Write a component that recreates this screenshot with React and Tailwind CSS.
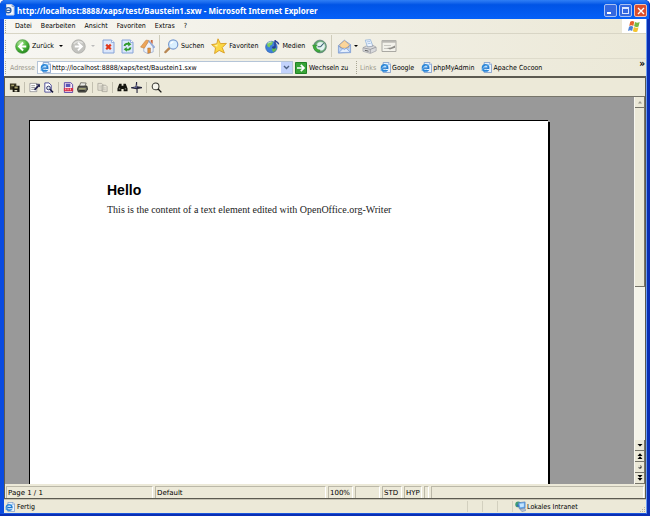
import clsx from 'clsx'

const menuItems = ['Datei', 'Bearbeiten', 'Ansicht', 'Favoriten', 'Extras', '?']

const links = ['Google', 'phpMyAdmin', 'Apache Cocoon']

function PageIcon({ className = 'size-3' }) {
    return (
        <svg viewBox="0 0 12 12" className={clsx('shrink-0', className)} aria-hidden="true">
            <path d="M3.5.5h6l2 2v9h-8z" fill="#e8f2fd" stroke="#6d8fc4" strokeWidth=".8" />
            <path d="M9.5.5v2h2" fill="#fff" stroke="#6d8fc4" strokeWidth=".7" />
            <circle cx="5" cy="6.5" r="3.3" fill="#cfe8fb" stroke="#2a86d8" strokeWidth="1.9" />
            <path d="M2.5 6.7h5.6" stroke="#1c72c9" strokeWidth="1.4" />
            <path d="M6.4 7.5h3v1.3H6.2z" fill="#e8f2fd" />
            <path d="M.6 9.6C2.5 5 6 2.6 9.6 3" fill="none" stroke="#7cbcf0" strokeWidth=".8" />
        </svg>
    )
}

function TitleIcon() {
    return (
        <svg viewBox="0 0 11 12" className="h-3 w-[11px] shrink-0" aria-hidden="true">
            <path d="M2.5.5H8l2 2V11H2.5z" fill="#f4f7fd" stroke="#c3cfe6" />
            <path d="M8 .5v2h2" fill="none" stroke="#8597bb" strokeWidth=".8" />
            <circle cx="4.3" cy="6.2" r="2.6" fill="#fff" stroke="#2b5fae" strokeWidth="1.4" />
            <path d="M2.2 6.4h4.6" stroke="#2b5fae" strokeWidth="1.1" />
        </svg>
    )
}

function BackIcon() {
    return (
        <svg viewBox="0 0 16 16" className="size-[15px]" aria-hidden="true">
            <defs>
                <radialGradient id="back" cx=".35" cy=".25" r=".85">
                    <stop offset="0" stopColor="#b5e6a0" />
                    <stop offset=".5" stopColor="#4fb83d" />
                    <stop offset="1" stopColor="#1c7d18" />
                </radialGradient>
            </defs>
            <circle cx="8" cy="8" r="7.3" fill="url(#back)" stroke="#3f8f35" strokeWidth=".7" />
            <path d="M8.6 3.8 4.4 8l4.2 4.2M4.8 8H12" fill="none" stroke="#fff" strokeWidth="2.1" />
        </svg>
    )
}

function ForwardIcon() {
    return (
        <svg viewBox="0 0 16 16" className="size-[15px]" aria-hidden="true">
            <circle cx="8" cy="8" r="7.2" fill="#c3c3bf" stroke="#aaaaa5" strokeWidth=".8" />
            <path d="M3 5.5a6 6 0 0 1 9.5-1" fill="none" stroke="#e2e2df" strokeWidth="1.5" />
            <path d="M7.4 3.8 11.6 8l-4.2 4.2M11.2 8H4" fill="none" stroke="#fff" strokeWidth="2" />
        </svg>
    )
}

function StopIcon() {
    return (
        <svg viewBox="0 0 13 15" className="h-[15px] w-[13px]" aria-hidden="true">
            <path d="M1 1h8.5L12 3.5V14H1z" fill="#dbe7fb" stroke="#86a3d8" />
            <path d="M9.5 1v2.5H12" fill="#fff" stroke="#86a3d8" strokeWidth=".8" />
            <path d="m4.2 5.6 4.6 4.6M8.8 5.6l-4.6 4.6" stroke="#e2371b" strokeWidth="2.2" />
        </svg>
    )
}

function RefreshIcon() {
    return (
        <svg viewBox="0 0 13 15" className="h-[15px] w-[13px]" aria-hidden="true">
            <path d="M1 1h8.5L12 3.5V14H1z" fill="#dbe7fb" stroke="#86a3d8" />
            <path d="M9.5 1v2.5H12" fill="#fff" stroke="#86a3d8" strokeWidth=".8" />
            <path d="M3.5 7c.3-2 2-2.6 4.2-2" fill="none" stroke="#2e9a2b" strokeWidth="1.9" />
            <path d="m7 2.6 3.3 2.6-3 2.3z" fill="#2e9a2b" />
            <path d="M9.5 8.4c-.3 2-2 2.6-4.2 2" fill="none" stroke="#2e9a2b" strokeWidth="1.9" />
            <path d="m6 12.8-3.3-2.6 3-2.3z" fill="#2e9a2b" />
        </svg>
    )
}

function HomeIcon() {
    return (
        <svg viewBox="0 0 16 16" className="size-[15px]" aria-hidden="true">
            <path d="m4 8.5 5.5-6L14 8.8v5L8 15.5l-4-2.2z" fill="#eef2fb" stroke="#8aa0cb" strokeWidth=".7" />
            <path d="M.6 8.6 6.4 1.2l3.2.4L4.6 9.8z" fill="#eda65a" stroke="#c27a38" strokeWidth=".6" />
            <path d="M9.2 1.8 15.2 8.6l-1.4 1" fill="none" stroke="#93a9d5" strokeWidth="1.5" />
            <path d="M11.5 1h2v4.3l-2-2.2z" fill="#c9643b" />
            <path d="M8.3 9.6h2.8v5l-2.8.7z" fill="#e6963f" stroke="#9c6029" strokeWidth=".5" />
        </svg>
    )
}

function SearchIcon() {
    return (
        <svg viewBox="0 0 16 16" className="size-[15px]" aria-hidden="true">
            <path d="M5.8 9.7 1.5 14" stroke="#b88754" strokeWidth="2.4" strokeLinecap="round" />
            <circle cx="9.8" cy="5.8" r="4.9" fill="#d9efff" stroke="#7a9bcf" strokeWidth="1.3" />
            <path d="M7.2 5.3c.3-1.5 1.4-2.3 2.9-2.3" fill="none" stroke="#fff" strokeWidth="1.4" />
        </svg>
    )
}

function StarIcon() {
    return (
        <svg viewBox="0 0 16 16" className="size-4" aria-hidden="true">
            <path
                d="m7 .8 2.4 4.8 6-.2-4.2 4.2 2.2 5.4-5.2-2.6-4.6 3.2.9-5.8L.6 6.6l5.2-.8z"
                fill="#fbd744"
                stroke="#d89c22"
                strokeWidth=".9"
                strokeLinejoin="round"
            />
            <path d="m7.2 3.2-.8 3.4-3.2.7 3 1.5z" fill="#fff3a6" />
        </svg>
    )
}

function MediaIcon() {
    return (
        <svg viewBox="0 0 16 16" className="size-[15px]" aria-hidden="true">
            <circle cx="6.8" cy="8.6" r="6.2" fill="#3d7fd9" stroke="#2a58ac" strokeWidth=".6" />
            <path d="M2 5.4c2-2.6 4.7-3.2 6.6-2.3L7.3 6 5.6 6.8 4.8 9 2.7 8z" fill="#7ccb5d" />
            <path d="m8 9.2 3.5.3.6 2.2-3.2 2.4-1.6-2.4z" fill="#62b952" />
            <path d="M3 4.7c1.2-1.2 2.4-1.6 3.8-1.6" fill="none" stroke="#d4edfb" />
            <path d="M10.7 9V1.2c.6 2 3.6 2 3.9 4.5" fill="none" stroke="#263e91" strokeWidth="1.5" />
            <ellipse cx="9.4" cy="9" rx="1.8" ry="1.4" fill="#263e91" />
        </svg>
    )
}

function HistoryIcon() {
    return (
        <svg viewBox="0 0 16 16" className="size-[15px]" aria-hidden="true">
            <circle cx="8.5" cy="8" r="6.8" fill="#5fa56c" stroke="#5b7b78" strokeWidth=".8" />
            <circle cx="9.2" cy="7.8" r="4.9" fill="#e4f3f0" stroke="#88b69c" strokeWidth=".6" />
            <path d="M9.2 8.2 12.5 4.5M9.2 8.2H6" stroke="#385b6e" strokeWidth="1.1" />
            <path d="m.6 6.5 5.2-.2-2 2.1c1 2 2.8 3.2 5 3.3L7.7 14C4.4 13.4 2.6 12 1.8 9.8z" fill="#3fae3c" stroke="#2a7c2c" strokeWidth=".4" />
        </svg>
    )
}

function MailIcon() {
    return (
        <svg viewBox="0 0 16 16" className="size-[15px]" aria-hidden="true">
            <path d="M1.5 7 7.8 1.3 14.5 6v8.5l-13 .5z" fill="#b8d3f8" stroke="#7596cf" strokeWidth=".8" />
            <path d="m3 6 5-4.2L13 6l-.5 3.5h-9z" fill="#fbd59a" stroke="#d9a35d" strokeWidth=".6" />
            <path d="m1.6 7.4 6.3 4 6.5-5" fill="none" stroke="#6f91cc" strokeWidth=".9" />
            <path d="m1.8 14.6 4.5-4.4 1.6 1.1 1.8-1.4 4.6 4.2z" fill="#e6f1ff" stroke="#7899d3" strokeWidth=".7" />
        </svg>
    )
}

function PrinterIcon() {
    return (
        <svg viewBox="0 0 16 16" className="size-[15px]" aria-hidden="true">
            <path d="M3.5 1.2 9 .7l2.6 7-5.8.8z" fill="#edf5ff" stroke="#8badd8" strokeWidth=".8" />
            <path d="m5.3 3 3.3-.3M6 5l3.3-.4" stroke="#8badd8" strokeWidth=".7" />
            <path d="m1 9.3 3.8-2 1 1.2 5.8-.8-.4-1.2 3.9 2.2v4L9 15.4l-8-2.3z" fill="#d9dadc" stroke="#9c9ea3" strokeWidth=".7" />
            <path d="M1.2 9.4 8.8 11l6-2.2M8.8 11v4" fill="none" stroke="#8c8e94" strokeWidth=".8" />
            <path d="m3 12 4 1" stroke="#555" />
        </svg>
    )
}

function EditIcon() {
    return (
        <svg viewBox="0 0 16 14" className="h-[14px] w-4" aria-hidden="true">
            <path d="M1 1.5h14v11H1z" fill="#f3f2eb" stroke="#aaa9a3" />
            <path d="M1 1.5h14v2.2H1z" fill="#bab9b4" />
            <path d="M3 6.5h7M3 9.5h4" stroke="#c9c8c2" />
            <path d="m6 9 4-.5 4-2v2.2l-5 1.7z" fill="#8f8e89" />
        </svg>
    )
}

function GoIcon() {
    return (
        <svg viewBox="0 0 12 12" className="size-3" aria-hidden="true">
            <path d="M.5.5h11v11H.5z" fill="#38a437" stroke="#218224" />
            <path d="M2 6h6.5M5.8 2.8 9 6 5.8 9.2" fill="none" stroke="#fff" strokeWidth="1.7" />
        </svg>
    )
}

function WindowsFlag() {
    return (
        <svg viewBox="0 0 14 12" className="h-[13px] w-[15px]" aria-hidden="true">
            <path d="M3 1.5c1.5-.9 2.5-.7 3.8 0l-.9 4c-1.3-.8-2.4-.8-3.8 0z" fill="#e8622b" />
            <path d="M7.5 1.9c1.500.8 2.700.7 4.300 0l-1 4c-1.500.7-2.800.7-4.200-.1z" fill="#77b843" />
            <path d="M1.9 6.2c1.5-.8 2.6-.7 3.8 0l-.9 4c-1.3-.8-2.4-.8-3.9 0z" fill="#4a80d5" />
            <path d="M6.4 6.5c1.500.8 2.700.8 4.300.1l-1 4c-1.500.7-2.800.7-4.200-.1z" fill="#f3c431" />
        </svg>
    )
}

function IntranetIcon() {
    return (
        <svg viewBox="0 0 12 12" className="size-[11px]" aria-hidden="true">
            <circle cx="3.5" cy="3.7" r="3.2" fill="#3f9d72" />
            <path d="M1.5 4.5c1-.8 2-.7 3 .5l-1 1.8z" fill="#2d69c2" />
            <path d="m3.5 2 7.5-1v6.5l-6.3 1z" fill="#67a9ee" stroke="#507bb9" strokeWidth=".7" />
            <path d="m5 3 4.7-.6v3.8l-4 .7z" fill="#c3e4ff" />
            <path d="m5.5 9 5.5-.8.5 2.3-4 1z" fill="#bdc8d9" stroke="#6881a4" strokeWidth=".6" />
        </svg>
    )
}

const writerTools = [
    [
        {
            label: 'Save copies',
            drawing: (
                <>
                    <path d="M1 1.5h7v7H1z" fill="#3a3620" />
                    <path d="M4 4h7.5v7H4z" fill="#16150c" />
                    <path d="M2.5 3h3v1.5h-3zM6 5h3.5v2H6z" fill="#aaa36b" />
                    <path d="M6 8.8h3v1.5H6z" fill="#dcd9c0" />
                </>
            ),
        },
    ],
    [
        {
            label: 'Edit file',
            drawing: (
                <>
                    <path d="M1 1.5h7.5v9H1z" fill="#fff" stroke="#77777d" strokeWidth=".7" />
                    <path d="M2.5 4h4M2.5 6h4M2.5 8h3" stroke="#777" strokeWidth=".8" />
                    <path d="m11 3.5-5 5" stroke="#20204e" strokeWidth="2" />
                    <path d="M8 2.5h3.5v3" fill="none" stroke="#20204e" />
                </>
            ),
        },
        {
            label: 'Page preview',
            drawing: (
                <>
                    <path d="M2 1h4.5L9 3.5V11H2z" fill="#fff" stroke="#34348e" strokeWidth=".9" />
                    <circle cx="6" cy="6.5" r="2" fill="#d9e7ef" stroke="#26265e" />
                    <path d="m7.5 8 3.5 3.3" stroke="#18183c" strokeWidth="1.6" />
                </>
            ),
        },
    ],
    [
        {
            label: 'Export as PDF',
            drawing: (
                <>
                    <path d="M1.5.7h7l2 2v8.8h-9z" fill="#f6e4ef" stroke="#5445a8" />
                    <path d="M3 2h5v3.5H3z" fill="#5b57b5" />
                    <path d="M1 6.5h10V10H1z" fill="#d62e48" />
                    <path d="M3 7v2M5.5 7v2M8 7v2" stroke="#fff" strokeWidth=".8" />
                </>
            ),
        },
        {
            label: 'Print',
            drawing: (
                <>
                    <path d="m4 .8 6 .3-1.5 4h-6z" fill="#e9e9e4" stroke="#55554e" strokeWidth=".8" />
                    <path d="m1.5 4.6 9.3-.2.7 3.6-2 3h-8l-1-3z" fill="#5f605a" stroke="#25251e" strokeWidth=".9" />
                    <path d="M2 7.5h7.5" stroke="#d5d58a" />
                    <path d="M2.5 9.5h6" stroke="#222" />
                </>
            ),
        },
    ],
    [
        {
            label: 'Copy',
            disabled: true,
            drawing: (
                <>
                    <path d="M1 1.5h4L6.5 3v6H1zM5.5 3.5h4L11 5v5.5H5.5z" fill="#e7e4d7" stroke="#aaa89d" strokeWidth=".9" />
                    <path d="M2.5 4.5H5M2.5 6.5H5M7 6.5h2.5M7 8.5h2.5" stroke="#b5b3a8" strokeWidth=".7" />
                </>
            ),
        },
    ],
    [
        {
            label: 'Find and replace',
            drawing: (
                <>
                    <path d="M2.5 2H5v2h2V2h2.5l2 5v3H7.2V7.5H4.8V10H.5V7z" fill="#15150f" />
                    <path d="M2 7.5h1.5M8.5 7.5H10" stroke="#a4a398" />
                </>
            ),
        },
        {
            label: 'Navigator',
            drawing: (
                <>
                    <path d="M5.5 0h1.2v4.5L12 5.5v1.2l-4.8.8V12H6V8L0 6.7V5.6l5-.8z" fill="#25253d" />
                    <path d="M6 3v3H3" fill="none" stroke="#8c90c9" strokeWidth=".6" />
                </>
            ),
        },
    ],
    [
        {
            label: 'Zoom',
            drawing: (
                <>
                    <circle cx="5" cy="4.8" r="3.7" fill="#f7f6ee" stroke="#33332e" strokeWidth="1.1" />
                    <path d="m7.8 7.6 3.5 3.7" stroke="#1b1b18" strokeWidth="1.5" />
                </>
            ),
        },
    ],
]

function Grip() {
    return <div className="h-[13px] w-px shrink-0 self-center border-l border-dotted border-[#aaa794]" />
}

function Separator() {
    return <div className="h-[22px] w-px shrink-0 bg-[#cfccba]" />
}

function DropArrow({ muted }) {
    return (
        <svg viewBox="0 0 4 2" className="h-[2px] w-1 shrink-0" aria-hidden="true">
            <path d="M0 0h4L2 2z" fill={muted ? '#bbb' : '#000'} />
        </svg>
    )
}

function TitleBar() {
    return (
        <header className="flex h-[19px] shrink-0 items-center rounded-t-[5px] border-r border-[#0a2fb4] bg-linear-to-b from-[#2f7ff5] via-[#0054e6] via-25% to-[#0560f8] pr-[2px] pl-1">
            <TitleIcon />
            <h1 className="ml-[2px] truncate pt-[2px] font-['Noto_Sans',sans-serif] text-[8px] leading-[12px] font-bold text-white">
                http://localhost:8888/xaps/test/Baustein1.sxw - Microsoft Internet Explorer
            </h1>
            <div className="ml-auto flex gap-[2px] pt-[2px]">
                <button aria-label="Minimize" className="flex size-[13px] rounded-[2px] border border-[#a9c1f3] bg-[#3468e0]">
                    <span className="mt-[7px] ml-[2px] h-[2px] w-1 bg-white" />
                </button>
                <button aria-label="Maximize" className="flex size-[13px] items-center justify-center rounded-[2px] border border-[#a9c1f3] bg-[#3468e0]">
                    <span className="size-[7px] border border-t-2 border-[#dbe6ff]" />
                </button>
                <button aria-label="Close" className="flex size-[13px] items-center justify-center rounded-[2px] border border-[#efc0b4] bg-[#dc4e2c]">
                    <svg viewBox="0 0 8 8" className="size-2">
                        <path d="m1 1 6 6M7 1 1 7" stroke="#fff" strokeWidth="1.4" />
                    </svg>
                </button>
            </div>
        </header>
    )
}

function MenuBar() {
    return (
        <nav className="flex h-[15px] shrink-0 border-b border-[#d8d5c5]">
            <div className="flex flex-1 items-center gap-[9px] bg-linear-to-r from-[#f7f6f2] to-[#ece9d8] pl-[1px]">
                <Grip />
                {menuItems.map((item) => (
                    <button key={item}>{item}</button>
                ))}
            </div>
            <div className="flex w-6 items-center justify-center bg-white">
                <WindowsFlag />
            </div>
        </nav>
    )
}

function ToolBar() {
    return (
        <div className="flex h-[25px] shrink-0 items-center border-b border-[#dedbcb] bg-linear-to-r from-[#f7f6f2] to-[#ece9d8] pl-[1px]">
            <Grip />
            <button className="ml-[9px] flex items-center gap-[2px]">
                <BackIcon />
                Zurück
            </button>
            <button aria-label="Back history" className="ml-[5px]">
                <DropArrow />
            </button>
            <button aria-label="Forward" className="ml-2">
                <ForwardIcon />
            </button>
            <button aria-label="Forward history" className="ml-[5px]">
                <DropArrow muted />
            </button>
            <div className="ml-[7px] flex gap-[6px]">
                <button aria-label="Stop">
                    <StopIcon />
                </button>
                <button aria-label="Refresh">
                    <RefreshIcon />
                </button>
                <button aria-label="Home">
                    <HomeIcon />
                </button>
            </div>
            <div className="ml-1 flex items-center">
                <Separator />
            </div>
            <div className="ml-1 flex gap-[7px]">
                <button className="flex items-center gap-[2px]">
                    <SearchIcon />
                    Suchen
                </button>
                <button className="flex items-center gap-[2px]">
                    <StarIcon />
                    Favoriten
                </button>
                <button className="flex items-center gap-[2px]">
                    <MediaIcon />
                    Medien
                </button>
                <button aria-label="History">
                    <HistoryIcon />
                </button>
            </div>
            <div className="ml-1 flex items-center">
                <Separator />
            </div>
            <button aria-label="Mail" className="ml-[5px] flex items-center gap-[2px]">
                <MailIcon />
                <DropArrow />
            </button>
            <button aria-label="Print" className="ml-1">
                <PrinterIcon />
            </button>
            <button aria-label="Edit" className="ml-1">
                <EditIcon />
            </button>
        </div>
    )
}

function AddressBar() {
    return (
        <div className="flex h-[17px] shrink-0 items-center bg-linear-to-r from-[#f4f3ee] to-[#ece9d8] pl-[1px]">
            <Grip />
            <label htmlFor="address" className="ml-1 w-[27px] text-[#9c998b]">
                Adresse
            </label>
            <div className="flex h-[13px] max-w-[256px] flex-1 items-center border border-[#b5c5d8] bg-white pl-[2px]">
                <PageIcon className="size-[11px]" />
                <input
                    id="address"
                    defaultValue="http://localhost:8888/xaps/test/Baustein1.sxw"
                    className="ml-[1px] h-[11px] min-w-0 flex-1 bg-transparent outline-none"
                />
                <button aria-label="Show addresses" className="flex h-[11px] w-[11px] items-center justify-center bg-[#c3d3fc]">
                    <svg viewBox="0 0 7 5" className="h-[5px] w-[7px]">
                        <path d="m1 1 2.5 2.5L6 1" fill="none" stroke="#4d6185" strokeWidth="1.4" />
                    </svg>
                </button>
            </div>
            <button className="ml-[2px] flex w-[61px] items-center gap-[2px] whitespace-nowrap">
                <GoIcon />
                Wechseln zu
            </button>
            <Grip />
            <span className="ml-[3px] w-5 text-[#9c998b]">Links</span>
            <div className="flex gap-[7px]">
                {links.map((link) => (
                    <a key={link} href="#" className="flex items-center gap-[1px] whitespace-nowrap">
                        <PageIcon className="size-[11px]" />
                        {link}
                    </a>
                ))}
            </div>
            <button aria-label="More links" className="mr-[1px] ml-auto self-start text-[10px] leading-[9px] font-bold">
                »
            </button>
        </div>
    )
}

function WriterToolBar() {
    return (
        <div className="flex h-[19px] shrink-0 items-center border-b border-[#77756a] bg-[#ece9d8]">
            {writerTools.map((group, i) => (
                <div key={i} className={clsx('flex gap-[3px] px-1', i > 0 && 'border-l border-[#c3c0b0]')}>
                    {group.map((tool) => (
                        <button key={tool.label} aria-label={tool.label} disabled={tool.disabled}>
                            <svg viewBox="0 0 12 12" className="size-[11px]">
                                {tool.drawing}
                            </svg>
                        </button>
                    ))}
                </div>
            ))}
        </div>
    )
}

function ScrollButton({ label, children }) {
    return (
        <button aria-label={label} className="flex h-[11px] w-full shrink-0 items-center justify-center border-r border-b border-[#77756a] bg-[#ece9d8]">
            <svg viewBox="0 0 6 6" className="size-[6px]">
                {children}
            </svg>
        </button>
    )
}

function ScrollBar() {
    return (
        <div className="flex w-[11px] shrink-0 flex-col border-l border-[#f8f7f0] bg-[#f5f4ea]">
            <ScrollButton label="Scroll up">
                <path d="M1 4.5h4L3 2z" fill="#9d9b8d" />
            </ScrollButton>
            <div className="flex-1">
                <div className="h-[54%] border-r border-b border-[#77756a] bg-[#ece9d8]" />
            </div>
            <ScrollButton label="Scroll down">
                <path d="M.5 2h5L3 4.5z" />
            </ScrollButton>
            <ScrollButton label="Previous page">
                <path d="M.5 3h5L3 .3zM.5 6h5L3 3.3z" />
            </ScrollButton>
            <ScrollButton label="Navigation">
                <circle cx="3" cy="3" r="1.7" fill="#333" />
                <circle cx="2.3" cy="2.3" r="1.2" fill="#ece9d8" />
            </ScrollButton>
            <ScrollButton label="Next page">
                <path d="M.5 0h5L3 2.7zM.5 3h5L3 5.7z" />
            </ScrollButton>
        </div>
    )
}

function StatusCell({ className, children }) {
    return (
        <div className={clsx('h-3 shrink-0 truncate border-t border-r border-l border-t-[#bbb8a8] border-r-[#fff] border-l-[#bbb8a8] pl-[1px] leading-[12px]', className)}>
            {children}
        </div>
    )
}

function WriterStatus() {
    return (
        <div className="flex h-[14px] shrink-0 items-end gap-[2px] bg-[#ece9d8] px-[1px] font-['DejaVu_Sans',sans-serif]">
            <StatusCell className="w-[147px]">Page 1 / 1</StatusCell>
            <StatusCell className="w-[171px]">Default</StatusCell>
            <StatusCell className="w-[25px]">100%</StatusCell>
            <StatusCell className="w-[25px]" />
            <StatusCell className="w-5">STD</StatusCell>
            <StatusCell className="w-[18px]">HYP</StatusCell>
            <StatusCell className="w-[5px]" />
            <StatusCell className="min-w-0 flex-1" />
        </div>
    )
}

function BrowserStatus() {
    return (
        <footer className="flex h-[14px] shrink-0 items-center border-t border-[#c5c2b2] bg-[#ece9d8] pl-[1px]">
            <PageIcon className="size-[10px]" />
            <span className="ml-[2px] flex-1">Fertig</span>
            <div className="flex h-[11px] gap-[14px]">
                <div className="w-px bg-[#d3d0bf]" />
                <div className="w-px bg-[#d3d0bf]" />
                <div className="w-px bg-[#d3d0bf]" />
                <div className="w-px bg-[#d3d0bf]" />
            </div>
            <div className="ml-[2px] flex w-[124px] items-center gap-[1px]">
                <IntranetIcon />
                Lokales Intranet
            </div>
            <svg viewBox="0 0 7 7" className="size-[7px] self-end" aria-hidden="true">
                <path d="M5 1h1v1H5zM3 3h1v1H3zM5 3h1v1H5zM1 5h1v1H1zM3 5h1v1H3zM5 5h1v1H5z" fill="#b5b29f" />
            </svg>
        </footer>
    )
}

export default function App() {
    return (
        <div className="flex h-screen flex-col overflow-hidden rounded-t-[5px] bg-[#0a2fb4] font-['DejaVu_Sans_Condensed','DejaVu_Sans',sans-serif] text-[7px] leading-[10px] text-black">
            <TitleBar />
            <div className="mr-[3px] mb-[2px] flex min-h-0 flex-1 flex-col border-r border-b border-l-4 border-r-[#6c9cf0] border-b-[#1a56dc] border-l-[#0a4be0] bg-[#ece9d8]">
                <MenuBar />
                <ToolBar />
                <AddressBar />

                {/* Embedded Writer document */}
                <main className="flex min-h-0 flex-1 flex-col border-t-2 border-r border-b border-l border-[#5c5a50]">
                    <WriterToolBar />
                    <div className="flex min-h-0 flex-1 bg-[#999999]">
                        <div className="flex min-w-0 flex-1 pt-[23px] pr-[86px] pl-6">
                            <article className="flex-1 border-t border-l border-black bg-white px-[77px] pt-[60px] shadow-[2px_2px_0_#000]">
                                <h2 className="font-['Liberation_Sans',Arial,sans-serif] text-[14px] leading-[18px] font-bold">Hello</h2>
                                <p className="font-['Liberation_Serif',serif] text-[10px] leading-[22px] whitespace-nowrap text-[#222]">
                                    This is the content of a text element edited with OpenOffice.org-Writer
                                </p>
                            </article>
                        </div>
                        <ScrollBar />
                    </div>
                    <WriterStatus />
                </main>
                <BrowserStatus />
            </div>
        </div>
    )
}
